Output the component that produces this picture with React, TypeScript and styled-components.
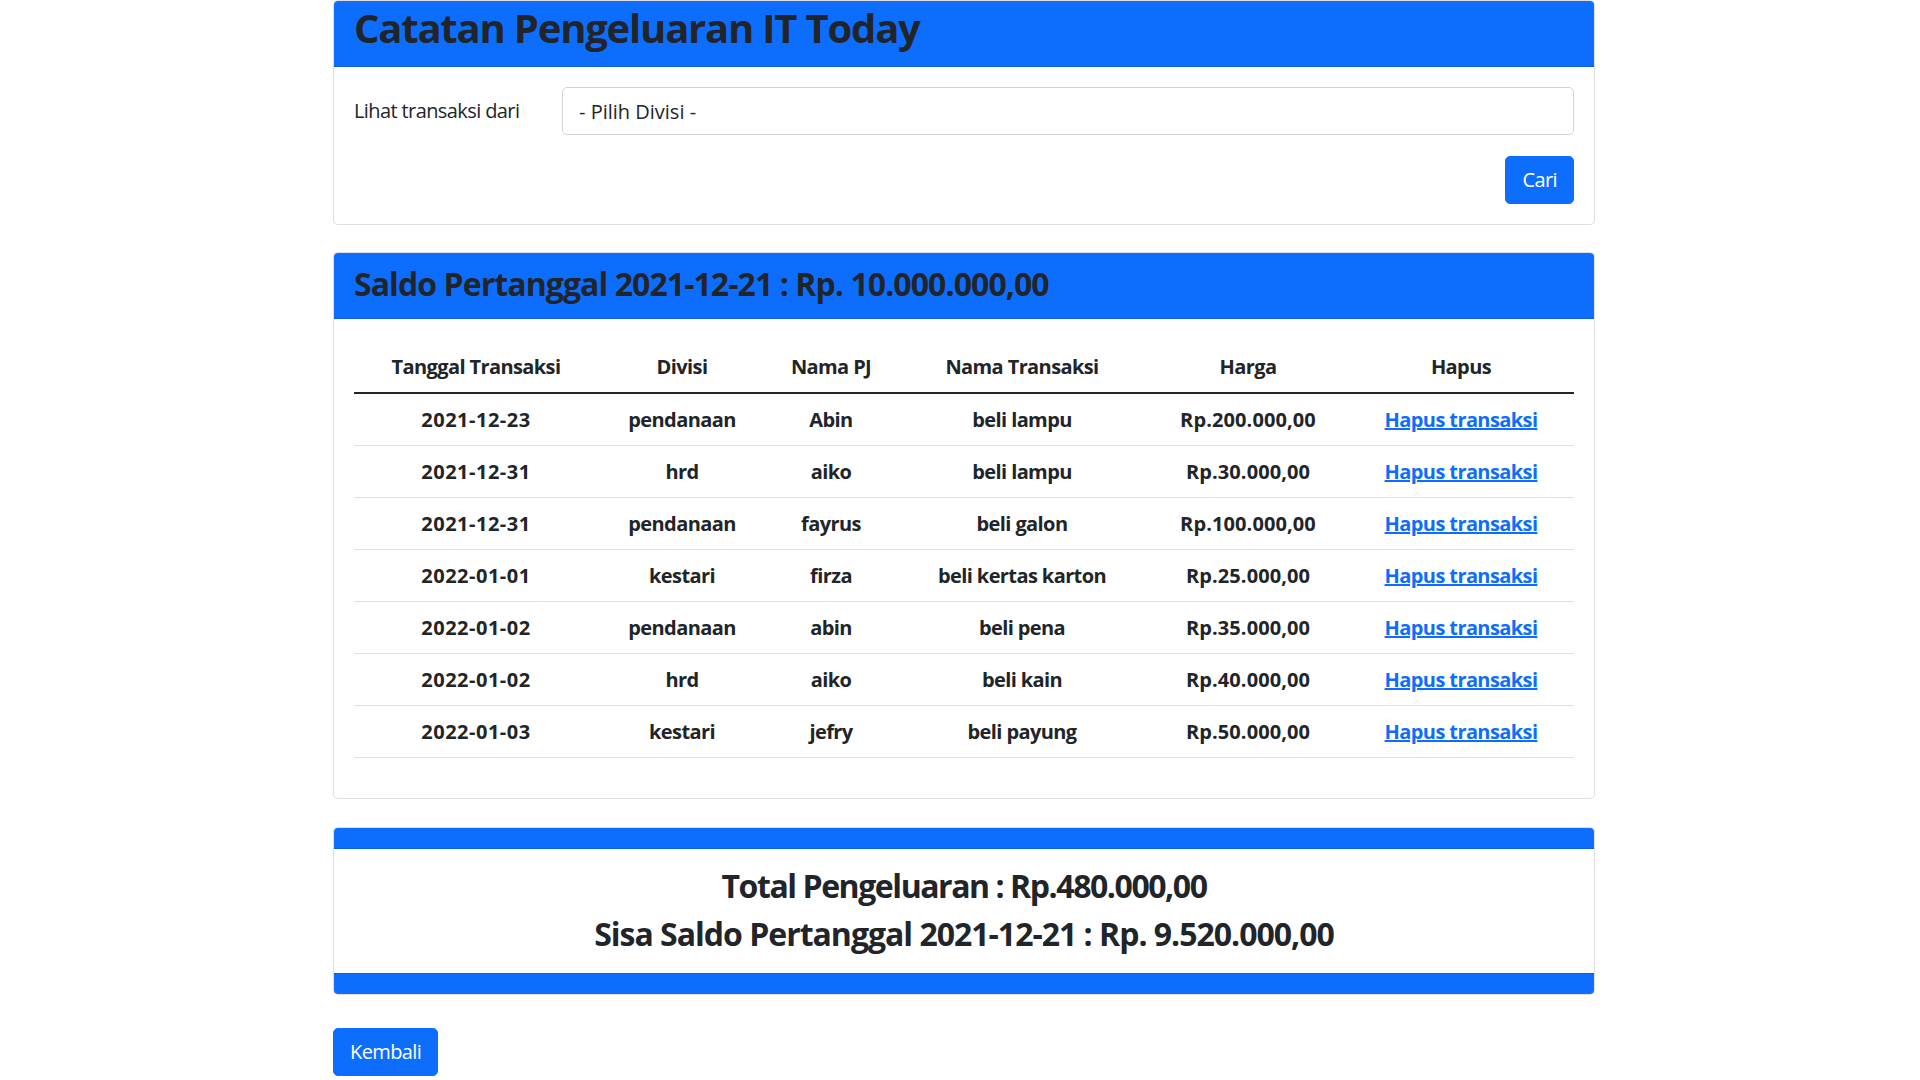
import React from "react";
import styled, { createGlobalStyle } from "styled-components";

const GlobalStyle = createGlobalStyle`
  html, body { margin: 0; padding: 0; background: #ffffff; }
  body {
    font-family: "Open Sans", "Noto Sans", sans-serif;
    font-size: 20px;
    line-height: 1.5;
    color: #212529;
    letter-spacing: -0.03em;
  }
  * { box-sizing: border-box; }
`;

const Page = styled.main`
  width: 1262px;
  margin-left: 333px;
  display: flex;
  flex-direction: column;
  align-items: stretch;
`;

const Card = styled.section<{ $after: number }>`
  display: flex;
  flex-direction: column;
  background: #ffffff;
  border: 1px solid rgba(0, 0, 0, 0.125);
  border-radius: 5px;
  overflow: hidden;
  margin-bottom: ${(p) => p.$after}px;
`;

const CardHeader = styled.header<{ $pad: string }>`
  background: #0d6efd;
  padding: ${(p) => p.$pad};
  border-bottom: 1px solid rgba(0, 0, 0, 0.125);
`;

const CardFooter = styled.footer`
  background: #0d6efd;
  height: 21px;
  border-top: 1px solid rgba(0, 0, 0, 0.125);
`;

const Title = styled.h1<{ $size: number; $lh: number; $spacing: number }>`
  margin: 0;
  font-size: ${(p) => p.$size}px;
  line-height: ${(p) => p.$lh}px;
  letter-spacing: ${(p) => p.$spacing}em;
  font-weight: 700;
  color: #212529;
`;

const CardBody = styled.div<{ $pad: string }>`
  padding: ${(p) => p.$pad};
  display: flex;
  flex-direction: column;
`;

const FormRow = styled.div`
  display: grid;
  grid-template-columns: 208px 1fr;
  align-items: center;
`;

const Label = styled.label`
  font-size: 20px;
  line-height: 30px;
`;

const Select = styled.select`
  appearance: none;
  -webkit-appearance: none;
  width: 100%;
  height: 48px;
  padding: 0 16px;
  font-family: inherit;
  font-size: 20px;
  letter-spacing: 0;
  color: #212529;
  background: #ffffff;
  border: 1px solid #ced4da;
  border-radius: 5px;
  outline: none;
`;

const Actions = styled.div<{ $justify: string; $top: number }>`
  display: flex;
  justify-content: ${(p) => p.$justify};
  margin-top: ${(p) => p.$top}px;
`;

const Button = styled.button`
  height: 48px;
  padding: 0 16px;
  font-family: inherit;
  font-size: 20px;
  letter-spacing: -0.03em;
  line-height: 30px;
  color: #ffffff;
  background: #0d6efd;
  border: 1px solid #0d6efd;
  border-radius: 5px;
  cursor: pointer;
`;

const Table = styled.table`
  width: 100%;
  table-layout: fixed;
  border-collapse: collapse;
  margin-bottom: 20px;
  font-weight: 700;
`;

const Th = styled.th`
  padding: 10px 8px;
  line-height: 30px;
  text-align: center;
  font-weight: 700;
  border-bottom: 2px solid #212529;
`;

const Td = styled.td<{ $spacing: number }>`
  padding: 10px 8px;
  line-height: 31px;
  text-align: center;
  letter-spacing: ${(p) => p.$spacing}em;
  border-bottom: 1px solid #dee2e6;
  white-space: nowrap;
`;

const DeleteLink = styled.a`
  color: #0d6efd;
  text-decoration: underline;
  cursor: pointer;
`;

const Summary = styled.div`
  padding: 18px 20px 20px;
  display: flex;
  flex-direction: column;
  align-items: center;
  gap: 9px;
`;

const SummaryLine = styled.h2<{ $spacing: number }>`
  margin: 0;
  font-size: 32px;
  line-height: 38.4px;
  font-weight: 700;
  letter-spacing: ${(p) => p.$spacing}em;
  text-align: center;
`;

const columns = [
  { label: "Tanggal Transaksi", width: 244, spacing: 0.025 },
  { label: "Divisi", width: 168, spacing: -0.03 },
  { label: "Nama PJ", width: 130, spacing: -0.03 },
  { label: "Nama Transaksi", width: 252, spacing: -0.03 },
  { label: "Harga", width: 200, spacing: 0.005 },
  { label: "Hapus", width: 226, spacing: -0.03 },
];

const rows = [
  ["2021-12-23", "pendanaan", "Abin", "beli lampu", "Rp.200.000,00"],
  ["2021-12-31", "hrd", "aiko", "beli lampu", "Rp.30.000,00"],
  ["2021-12-31", "pendanaan", "fayrus", "beli galon", "Rp.100.000,00"],
  ["2022-01-01", "kestari", "firza", "beli kertas karton", "Rp.25.000,00"],
  ["2022-01-02", "pendanaan", "abin", "beli pena", "Rp.35.000,00"],
  ["2022-01-02", "hrd", "aiko", "beli kain", "Rp.40.000,00"],
  ["2022-01-03", "kestari", "jefry", "beli payung", "Rp.50.000,00"],
];

export default function App() {
  return (
    <>
      <GlobalStyle />
      <Page>
        <Card $after={27}>
          <CardHeader $pad="3px 20px 14px">
            <Title $size={40} $lh={48} $spacing={-0.03}>
              Catatan Pengeluaran IT Today
            </Title>
          </CardHeader>
          <CardBody $pad="20px">
            <FormRow>
              <Label htmlFor="divisi">Lihat transaksi dari</Label>
              <Select id="divisi" defaultValue="">
                <option value="">- Pilih Divisi -</option>
                <option value="pendanaan">pendanaan</option>
                <option value="hrd">hrd</option>
                <option value="kestari">kestari</option>
              </Select>
            </FormRow>
            <Actions $justify="flex-end" $top={21}>
              <Button type="button">Cari</Button>
            </Actions>
          </CardBody>
        </Card>

        <Card $after={28}>
          <CardHeader $pad="12px 20px 15px">
            <Title as="h2" $size={32} $lh={38.4} $spacing={-0.029}>
              Saldo Pertanggal 2021-12-21 : Rp. 10.000.000,00
            </Title>
          </CardHeader>
          <CardBody $pad="23px 20px 20px">
            <Table>
              <colgroup>
                {columns.map((c) => (
                  <col key={c.label} style={{ width: c.width }} />
                ))}
              </colgroup>
              <thead>
                <tr>
                  {columns.map((c) => (
                    <Th key={c.label}>{c.label}</Th>
                  ))}
                </tr>
              </thead>
              <tbody>
                {rows.map((r, i) => (
                  <tr key={i}>
                    {r.map((cell, j) => (
                      <Td key={j} $spacing={columns[j].spacing}>
                        {cell}
                      </Td>
                    ))}
                    <Td $spacing={columns[5].spacing}>
                      <DeleteLink href="#">Hapus transaksi</DeleteLink>
                    </Td>
                  </tr>
                ))}
              </tbody>
            </Table>
          </CardBody>
        </Card>

        <Card $after={33}>
          <CardHeader $pad="10px 20px" />
          <Summary>
            <SummaryLine $spacing={-0.045}>Total Pengeluaran : Rp.480.000,00</SummaryLine>
            <SummaryLine $spacing={-0.0315}>
              Sisa Saldo Pertanggal 2021-12-21 : Rp. 9.520.000,00
            </SummaryLine>
          </Summary>
          <CardFooter />
        </Card>

        <Actions $justify="flex-start" $top={0}>
          <Button type="button">Kembali</Button>
        </Actions>
      </Page>
    </>
  );
}
